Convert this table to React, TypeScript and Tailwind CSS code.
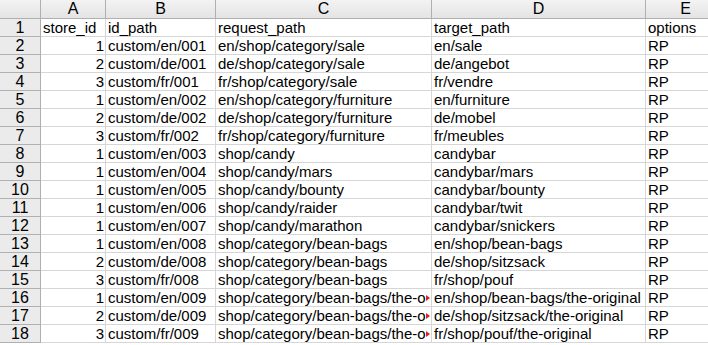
const cols = ["A", "B", "C", "D", "E"];

const rows: [string, string, string, string, string][] = [
  ["store_id", "id_path", "request_path", "target_path", "options"],
  ["1", "custom/en/001", "en/shop/category/sale", "en/sale", "RP"],
  ["2", "custom/de/001", "de/shop/category/sale", "de/angebot", "RP"],
  ["3", "custom/fr/001", "fr/shop/category/sale", "fr/vendre", "RP"],
  ["1", "custom/en/002", "en/shop/category/furniture", "en/furniture", "RP"],
  ["2", "custom/de/002", "de/shop/category/furniture", "de/mobel", "RP"],
  ["3", "custom/fr/002", "fr/shop/category/furniture", "fr/meubles", "RP"],
  ["1", "custom/en/003", "shop/candy", "candybar", "RP"],
  ["1", "custom/en/004", "shop/candy/mars", "candybar/mars", "RP"],
  ["1", "custom/en/005", "shop/candy/bounty", "candybar/bounty", "RP"],
  ["1", "custom/en/006", "shop/candy/raider", "candybar/twit", "RP"],
  ["1", "custom/en/007", "shop/candy/marathon", "candybar/snickers", "RP"],
  ["1", "custom/en/008", "shop/category/bean-bags", "en/shop/bean-bags", "RP"],
  ["2", "custom/de/008", "shop/category/bean-bags", "de/shop/sitzsack", "RP"],
  ["3", "custom/fr/008", "shop/category/bean-bags", "fr/shop/pouf", "RP"],
  ["1", "custom/en/009", "shop/category/bean-bags/the-original", "en/shop/bean-bags/the-original", "RP"],
  ["2", "custom/de/009", "shop/category/bean-bags/the-original", "de/shop/sitzsack/the-original", "RP"],
  ["3", "custom/fr/009", "shop/category/bean-bags/the-original", "fr/shop/pouf/the-original", "RP"],
];

const gridCols = "grid grid-cols-[41px_65px_110px_216px_214px_80px]";

export default function App() {
  return (
    <div
      className="w-[708px] h-[345px] overflow-hidden bg-white text-black"
      style={{ fontFamily: '"Liberation Sans", Arial, sans-serif' }}
    >
      {/* column letters */}
      <div className={`${gridCols} h-[19px] bg-gradient-to-b from-[#f3f3f3] to-[#e3e3e3] text-[16px] leading-[18px]`}>
        <div className="border-r border-b border-[#b0b0b0]" />
        {cols.map((c) => (
          <div key={c} className="border-r border-b border-[#b0b0b0] text-center">
            {c}
          </div>
        ))}
      </div>

      {rows.map((r, i) => {
        const overflow = r[2].length > 30;
        return (
          <div key={i} className={`${gridCols} h-[18px] text-[15px] leading-[17px]`}>
            <div className="border-r border-b border-[#b0b0b0] bg-[#ebebeb] text-center text-[16px]">
              {i + 1}
            </div>
            <div
              className={`border-r border-b border-[#d6d6d6] pr-[1px] pl-[2px] whitespace-nowrap overflow-hidden ${
                i === 0 ? "text-left" : "text-right"
              }`}
            >
              {r[0]}
            </div>
            <div className="border-r border-b border-[#d6d6d6] pl-[2px] whitespace-nowrap overflow-hidden">
              {r[1]}
            </div>
            <div className="flex items-center border-r border-b border-[#d6d6d6] pl-[2px] pr-[1px]">
              <span className="flex-1 min-w-0 overflow-hidden whitespace-nowrap">{r[2]}</span>
              {overflow && (
                <span className="w-0 h-0 border-y-[3px] border-y-transparent border-l-[4px] border-l-[#e0201a]" />
              )}
            </div>
            <div className="border-r border-b border-[#d6d6d6] pl-[2px] whitespace-nowrap overflow-hidden">
              {r[3]}
            </div>
            <div className="border-r border-b border-[#d6d6d6] pl-[2px] whitespace-nowrap overflow-hidden">
              {r[4]}
            </div>
          </div>
        );
      })}
    </div>
  );
}
